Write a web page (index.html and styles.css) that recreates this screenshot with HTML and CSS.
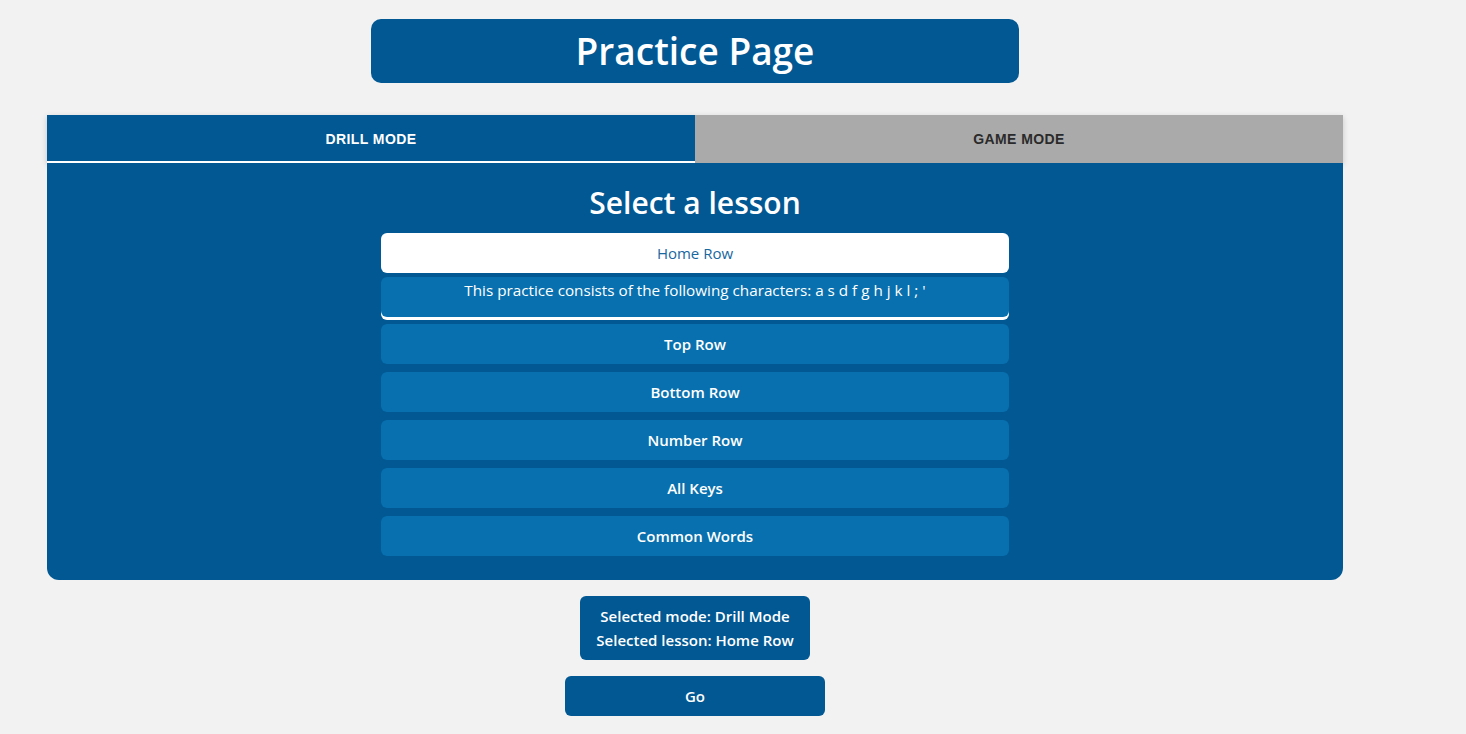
FILE: index.html
```html
<!DOCTYPE html>
<html lang="en">
<head>
<meta charset="utf-8">
<title>Practice Page</title>
<link rel="stylesheet" href="styles.css">
</head>
<body>
<div class="page">
  <h1 class="title">Practice Page</h1>
  <div class="card">
    <div class="tabs">
      <button class="tab tab-active">Drill Mode</button>
      <button class="tab">Game Mode</button>
    </div>
    <div class="panel">
      <h2 class="panel-heading">Select a lesson</h2>
      <div class="lessons">
        <button class="lesson lesson-selected">Home Row</button>
        <div class="lesson-desc">This practice consists of the following characters: a s d f g h j k l ; '</div>
        <button class="lesson lesson-after-desc">Top Row</button>
        <button class="lesson">Bottom Row</button>
        <button class="lesson">Number Row</button>
        <button class="lesson">All Keys</button>
        <button class="lesson">Common Words</button>
      </div>
    </div>
  </div>
  <div class="summary">
    <div>Selected mode: Drill Mode</div>
    <div>Selected lesson: Home Row</div>
  </div>
  <button class="go">Go</button>
</div>
</body>
</html>
```

FILE: styles.css
```css
body {
  margin: 0;
  background: #f2f2f2;
  font-family: "Open Sans", "Noto Sans", sans-serif;
}

.page {
  width: 1390px;
  display: flex;
  flex-direction: column;
  align-items: center;
}

.title {
  margin: 19px 0 0;
  width: 648px;
  height: 64px;
  box-sizing: border-box;
  background: #015893;
  border-radius: 10px;
  color: #fff;
  font-size: 37px;
  font-weight: 600;
  line-height: 64px;
  text-align: center;
}

.card {
  margin-top: 32px;
  width: 1296px;
}

.tabs {
  display: flex;
  height: 48px;
  box-shadow: 0 2px 6px rgba(0, 0, 0, 0.18);
}

.tab {
  flex: 1;
  border: none;
  margin: 0;
  padding: 0;
  background: #aaaaaa;
  color: #2a2a2a;
  font-family: "Liberation Sans", Arial, sans-serif;
  font-weight: 700;
  font-size: 14px;
  text-transform: uppercase;
  letter-spacing: 0.4px;
  box-sizing: border-box;
}

.tab-active {
  background: #015893;
  color: #fff;
  border-bottom: 2px solid #fff;
  padding-top: 2px;
}

.panel {
  background: #015893;
  border-radius: 0 0 12px 12px;
  padding: 20px 0 24px;
  display: flex;
  flex-direction: column;
  align-items: center;
}

.panel-heading {
  margin: 0 0 10px;
  color: #fff;
  font-size: 30px;
  font-weight: 600;
  line-height: 40px;
}

.lessons {
  width: 628px;
  display: flex;
  flex-direction: column;
  gap: 8px;
}

.lesson {
  height: 40px;
  border: none;
  border-radius: 6px;
  background: #0870ae;
  color: #fff;
  font-family: "Open Sans", "Noto Sans", sans-serif;
  font-size: 15px;
  font-weight: 600;
  padding: 0;
}

.lesson-selected {
  background: #fff;
  color: #1767a0;
  font-weight: 500;
}

.lesson-desc {
  margin-top: -4px;
  height: 40px;
  box-sizing: border-box;
  background: #0870ae;
  border-radius: 6px;
  box-shadow: 0 3px 0 #fff;
  color: #fff;
  font-size: 15.25px;
  line-height: 24px;
  padding-top: 1px;
  text-align: center;
}

.lesson-after-desc {
  margin-top: -1px;
}

.summary {
  margin-top: 16px;
  width: 230px;
  height: 64px;
  box-sizing: border-box;
  padding: 8px 0;
  background: #015893;
  border-radius: 6px;
  color: #fff;
  font-size: 15px;
  font-weight: 600;
  line-height: 24px;
  text-align: center;
}

.go {
  margin-top: 16px;
  width: 260px;
  height: 40px;
  border: none;
  border-radius: 6px;
  background: #015893;
  color: #fff;
  font-family: "Open Sans", "Noto Sans", sans-serif;
  font-size: 15px;
  font-weight: 600;
}
```
